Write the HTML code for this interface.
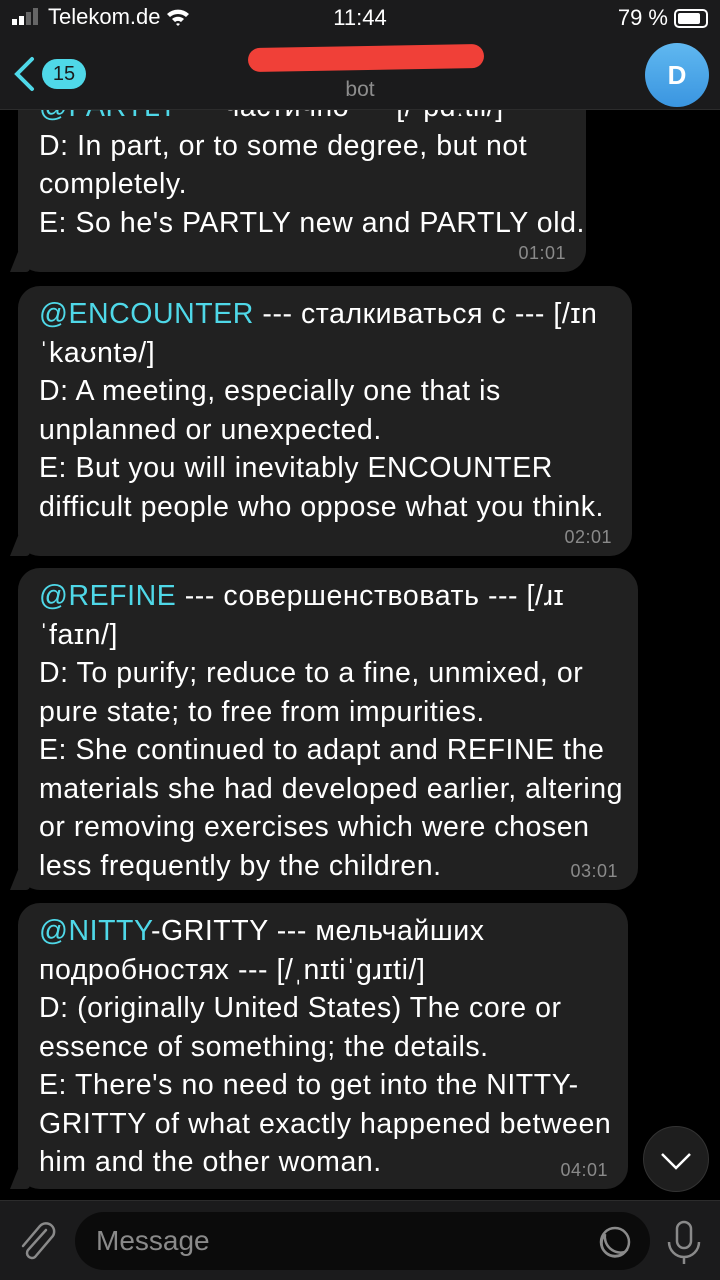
<!DOCTYPE html>
<html><head><meta charset="utf-8"><style>
*{margin:0;padding:0;box-sizing:border-box}
body{width:720px;height:1280px;background:#000;font-family:"Liberation Sans",sans-serif;color:#fff;position:relative;overflow:hidden}
.b{position:absolute;left:18px;background:#212121;border-radius:22px;}
.b .t{position:absolute;left:21px;font-size:28.5px;line-height:38.5px;white-space:nowrap;letter-spacing:0.55px}
.c{color:#4fd8e8}
.ts{position:absolute;font-size:18px;color:#8a8a8a;letter-spacing:0.5px}
.tail{position:absolute;left:-8px;bottom:0;width:20px;height:20px;background:#212121;border-bottom-right-radius:4px;clip-path:polygon(40% 0,100% 0,100% 100%,0 100%)}
</style></head><body>

<div class="b" style="top:60px;height:212px;width:568px">
<div class="tail"></div>
<div class="t" style="top:28px"><span class="c">@PARTLY</span> --- частично --- [/ˈpɑːtli/]<br>D: In part, or to some degree, but not<br>completely.<br>E: So he's PARTLY new and PARTLY old.</div>
<div class="ts" style="right:20px;bottom:8px">01:01</div>
</div>

<div class="b" style="top:286px;height:270px;width:614px">
<div class="tail"></div>
<div class="t" style="top:9px"><span class="c">@ENCOUNTER</span> --- сталкиваться с --- [/ɪn<br>ˈkaʊntə/]<br>D: A meeting, especially one that is<br>unplanned or unexpected.<br>E: But you will inevitably ENCOUNTER<br>difficult people who oppose what you think.</div>
<div class="ts" style="right:20px;bottom:8px">02:01</div>
</div>

<div class="b" style="top:568px;height:322px;width:620px">
<div class="tail"></div>
<div class="t" style="top:9px"><span class="c">@REFINE</span> --- совершенствовать --- [/ɹɪ<br>ˈfaɪn/]<br>D: To purify; reduce to a fine, unmixed, or<br>pure state; to free from impurities.<br>E: She continued to adapt and REFINE the<br>materials she had developed earlier, altering<br>or removing exercises which were chosen<br>less frequently by the children.</div>
<div class="ts" style="right:20px;bottom:8px">03:01</div>
</div>

<div class="b" style="top:903px;height:286px;width:610px">
<div class="tail"></div>
<div class="t" style="top:9px"><span class="c">@NITTY</span>-GRITTY --- мельчайших<br>подробностях --- [/ˌnɪtiˈɡɹɪti/]<br>D: (originally United States) The core or<br>essence of something; the details.<br>E: There's no need to get into the NITTY-<br>GRITTY of what exactly happened between<br>him and the other woman.</div>
<div class="ts" style="right:20px;bottom:8px">04:01</div>
</div>

<div style="position:absolute;left:643px;top:1126px;width:66px;height:66px;border-radius:50%;background:#1e1e1e;border:1px solid #333"></div>
<svg style="position:absolute;left:643px;top:1126px" width="66" height="66"><path d="M19 28 L33 42 L47 28" stroke="#fff" stroke-width="2.5" fill="none"/></svg>

<div style="position:absolute;left:0;top:0;width:720px;height:110px;background:#1b1b1c;border-bottom:1px solid #2c2c2c"></div>
<div style="position:absolute;left:10px;top:4px;font-size:22px;display:flex;align-items:center;gap:4px">
<svg width="34" height="20"><rect x="2" y="12" width="5" height="6" fill="#fff"/><rect x="9" y="9" width="5" height="9" fill="#fff"/><rect x="16" y="5" width="5" height="13" fill="#666"/><rect x="23" y="1" width="5" height="17" fill="#666"/></svg>
<span>Telekom.de</span>
<svg width="26" height="20" viewBox="0 0 26 20"><path d="M2 7 A16 16 0 0 1 24 7 L21 10 A12 12 0 0 0 5 10Z M7 12 A9 9 0 0 1 19 12 L16 15 A5 5 0 0 0 10 15Z M13 19 L11 17 A3 3 0 0 1 15 17Z" fill="#fff"/></svg>
</div>
<div style="position:absolute;left:0;width:720px;top:5px;text-align:center;font-size:22px">11:44</div>
<div style="position:absolute;right:12px;top:5px;font-size:22px;display:flex;align-items:center;gap:6px">
<span>79 %</span>
<div style="width:34px;height:19px;border:2px solid #fff;border-radius:5px;padding:2px;position:relative"><div style="width:22px;height:100%;background:#fff;border-radius:2px"></div></div>
</div>
<svg style="position:absolute;left:12px;top:56px" width="24" height="36"><path d="M20 3 L5 18 L20 33" stroke="#4fd8e8" stroke-width="4" fill="none" stroke-linecap="round"/></svg>
<div style="position:absolute;left:42px;top:59px;width:44px;height:30px;border-radius:15px;background:#4fd8e8;color:#1b1b1c;font-size:20px;text-align:center;line-height:30px">15</div>
<div style="position:absolute;left:248px;top:46px;width:236px;height:24px;border-radius:12px;background:#f04038;transform:rotate(-1deg)"></div>
<div style="position:absolute;left:0;width:720px;top:78px;text-align:center;font-size:21px;color:#8d8d8d">bot</div>
<div style="position:absolute;left:645px;top:43px;width:64px;height:64px;border-radius:50%;background:linear-gradient(#60b8f0,#3a95e0);color:#fff;font-size:26px;font-weight:bold;text-align:center;line-height:64px">D</div>

<div style="position:absolute;left:0;top:1200px;width:720px;height:80px;background:#1b1b1c;border-top:1px solid #2c2c2c"></div>
<svg style="position:absolute;left:16px;top:1218px" width="42" height="46" viewBox="0 0 42 46"><path d="M30 12 L12 32 A5 5 0 0 0 19 39 L36 19 A8 8 0 0 0 24 8 L7 28" stroke="#8a8a8a" stroke-width="2.5" fill="none" stroke-linecap="round"/></svg>
<div style="position:absolute;left:75px;top:1212px;width:575px;height:58px;border-radius:29px;background:#0b0b0b"></div>
<div style="position:absolute;left:96px;top:1225px;font-size:28px;color:#8a8a8a">Message</div>
<svg style="position:absolute;left:597px;top:1224px" width="36" height="36"><circle cx="18" cy="18" r="14" stroke="#8a8a8a" stroke-width="2.5" fill="none"/><path d="M8 10 A12 12 0 0 0 28 28 A16 16 0 0 1 8 10" stroke="#8a8a8a" stroke-width="2.5" fill="none"/></svg>
<svg style="position:absolute;left:664px;top:1220px" width="40" height="46"><rect x="13" y="2" width="14" height="26" rx="7" stroke="#8a8a8a" stroke-width="2.5" fill="none"/><path d="M5 22 A15 15 0 0 0 35 22 M20 37 V44" stroke="#8a8a8a" stroke-width="2.5" fill="none"/></svg>
</body></html>
